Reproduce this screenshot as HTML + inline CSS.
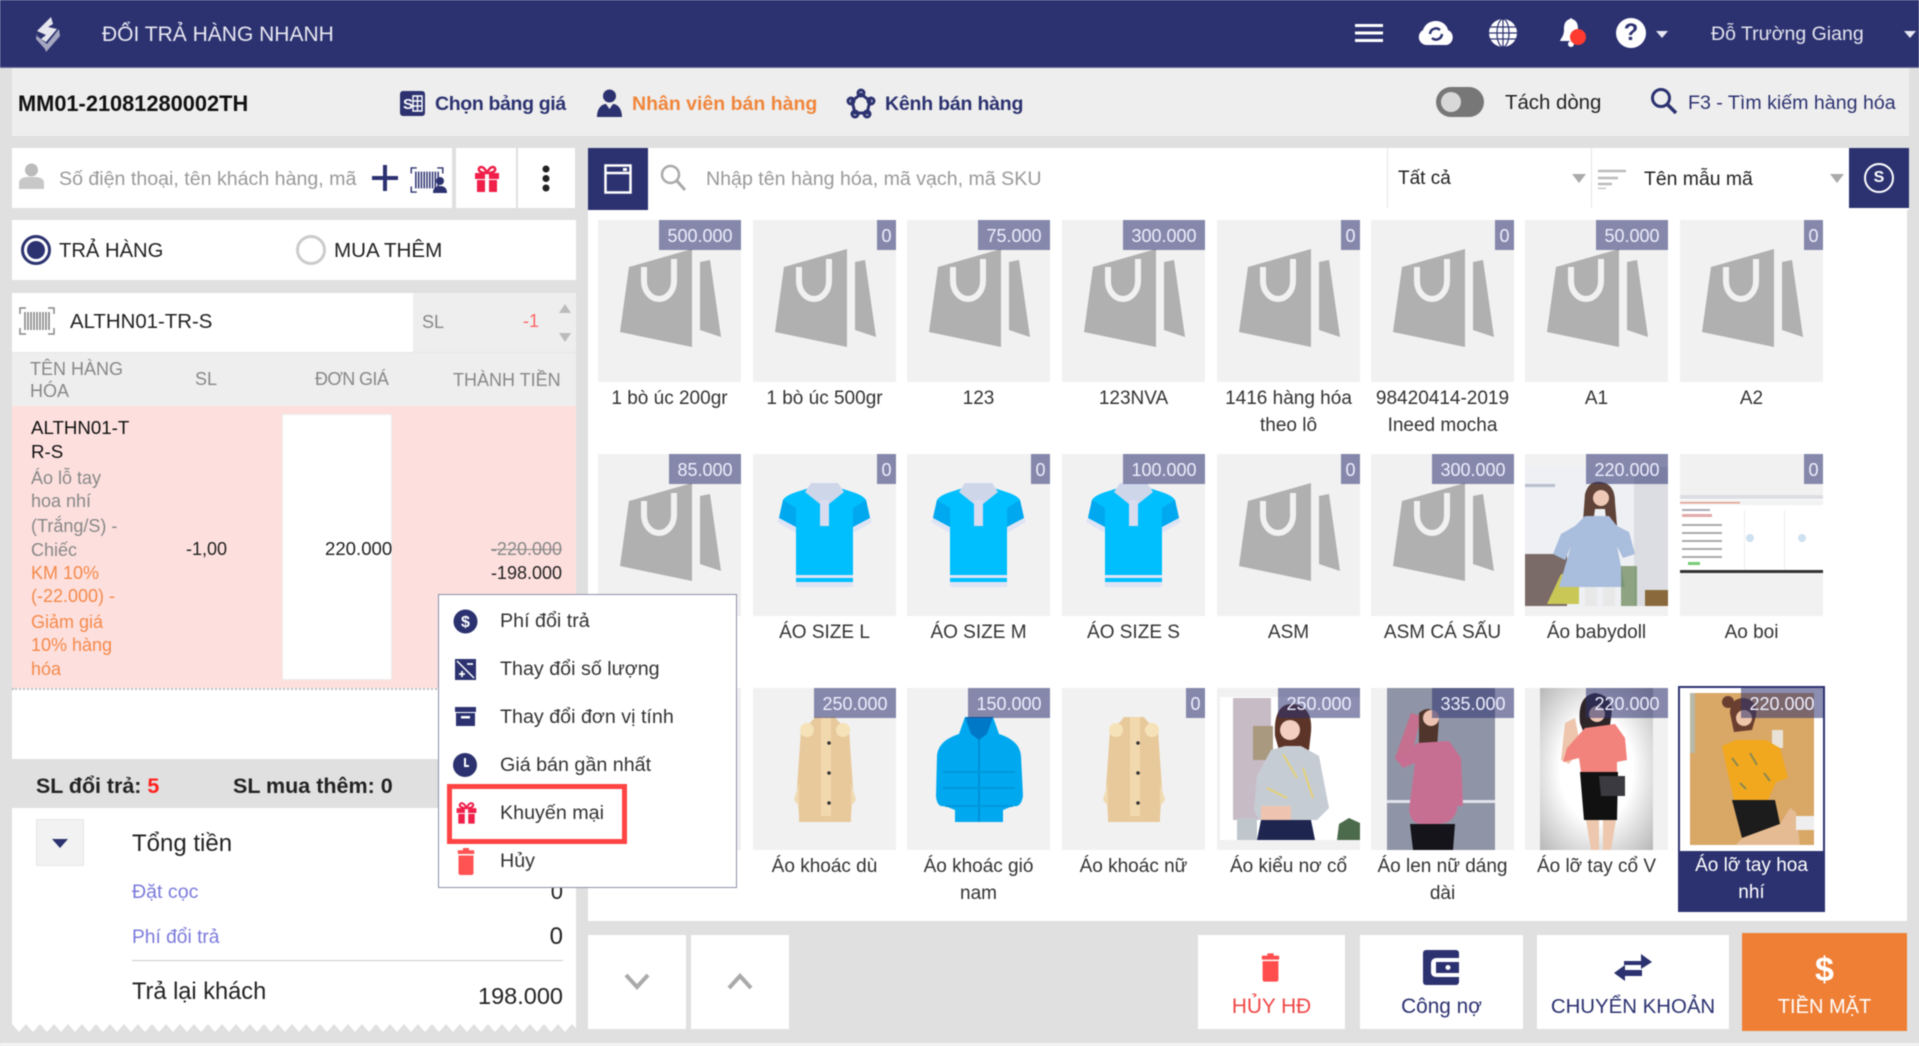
<!DOCTYPE html>
<html lang="vi"><head><meta charset="utf-8"><title>Đổi trả hàng nhanh</title>
<style>
html,body{margin:0;padding:0}
body{width:1919px;height:1046px;background:#e0e0e0;position:relative;overflow:hidden;font-family:"Liberation Sans","DejaVu Sans",sans-serif;font-size:18px;color:#333;filter:blur(.4px)}
.b{position:absolute}
.t{position:absolute;white-space:nowrap;line-height:24px}
.c{position:absolute;width:143px;height:162px;background:#f1f1f1}
.c svg{position:absolute;left:0;top:0}
.p{position:absolute;right:0;top:0;height:30px;line-height:32px;text-align:center;color:#eef;background:rgba(44,50,112,.55);font-size:18px}
.p7{width:82px}.p6{width:72px}.p1{width:19px}
.l{position:absolute;left:0;width:143px;top:165px;text-align:center;line-height:27px;color:#333;font-size:19px}
.g{color:#888}.o{color:#f5894a}.n{color:#2c3270}
.m{font-size:19.700px;color:#333}
</style></head><body>
<svg width="0" height="0" style="position:absolute"><defs>
<symbol id="bag" viewBox="0 0 143 162"><polygon points="31,47 94,37 94,127 22,112" fill="#b0b0b0"/><polygon points="31,47 94,29 94,47" fill="#b0b0b0"/><polygon points="102,42 112,40 123,117 102,110" fill="#b0b0b0"/><path d="M46 47v14a15 18 0 0 0 30 0v-22" fill="none" stroke="#f1f1f1" stroke-width="6"/></symbol>
<symbol id="shirt" viewBox="0 0 143 162"><path d="M56 34C44 38 34 40 30 46L26 64 43 74V133H100V74L117 64 113 46C109 40 99 38 87 34L72 44z" fill="#00bfff"/><path d="M30 46L26 64 43 74V54zM113 46L117 64 100 74V54z" fill="#00a8ef"/><path d="M26 64L43 73V79L24 68zM117 64L100 73V79L119 68z" fill="#dfe4f5"/><path d="M43 121H100V124H43zM43 128H100V133H43z" fill="#dfe4f5"/><path d="M58 29H85L91 38 76 50H67L52 38z" fill="#ced6ea"/><rect x="67" y="46" width="9" height="26" fill="#d8dcee"/></symbol>
<symbol id="coat" viewBox="0 0 143 162"><path d="M58 34L62 29H82L86 34 96 42 100 100 98 128H46L44 100 48 42z" fill="#e8c99c"/><rect x="68" y="29" width="10" height="105" fill="#f2d9ad"/><ellipse cx="54" cy="42" rx="7" ry="7" fill="#f6e2b8"/><ellipse cx="90" cy="42" rx="7" ry="7" fill="#f6e2b8"/><path d="M46 95L41 112 46 118zM98 95L103 112 98 118z" fill="#f0dab0"/><circle cx="76" cy="55" r="1.800" fill="#333"/><circle cx="76" cy="85" r="1.800" fill="#333"/><circle cx="76" cy="115" r="1.800" fill="#333"/><rect x="46" y="128" width="52" height="6" fill="#e8c99c"/></symbol>
<symbol id="gift" viewBox="0 0 28 28"><path d="M2 8h24v6H2zM4 15h8v12H4zM16 15h8v12h-8z" fill="currentColor"/><rect x="12" y="8" width="4" height="19" fill="#fff" opacity=".95"/><path d="M14 8C8 8 5 6 6 3.500S11 1 14 8zM14 8C20 8 23 6 22 3.500S17 1 14 8z" fill="none" stroke="currentColor" stroke-width="2.500"/></symbol>
<symbol id="trash" viewBox="0 0 24 36"><rect x="8" y="0" width="8" height="4" fill="currentColor"/><rect x="1" y="3" width="22" height="5" rx="1" fill="currentColor"/><path d="M2 10H22V33Q22 36 19 36H5Q2 36 2 33z" fill="currentColor"/></symbol>
<symbol id="bar" viewBox="0 0 36 28"><path d="M1 7V1H7M29 1H35V7M1 21V27H7M29 27H35V21" fill="none" stroke="currentColor" stroke-width="1.500"/><path d="M6 5v18M9 5v18M12 5v18M15 5v18M18 5v18M21 5v18M24 5v18M27 5v18M30 5v18" stroke="currentColor" stroke-width="1.600"/></symbol>
</defs></svg>

<!-- header -->
<div class="b" style="left:0;top:0;width:1919px;height:67px;background:#2c3270;border-bottom:1px solid #6a6d9e"></div>
<svg class="b" style="left:33px;top:16px" width="30" height="36" viewBox="0 0 30 36"><path d="M18 1L4 15 13 19 8 23 13 26 24 13 15 11 20 8z" fill="#e6e6ee"/><path d="M4 17L3 23 12 33 13 36 27 20 26 13 14 28 4 20z" fill="#a5a7c0"/></svg>
<div class="t" style="left:102px;top:23px;color:#e8e8f2;font-size:21px">ĐỔI TRẢ HÀNG NHANH</div>
<svg class="b" style="left:1355px;top:23px" width="28" height="20"><path d="M0 2.500H28M0 10H28M0 17.500H28" stroke="#fff" stroke-width="3"/></svg>
<svg class="b" style="left:1417px;top:20px" width="38" height="26" viewBox="0 0 38 26"><path d="M9 25a8 8 0 0 1-3-15C8 4 13 1 19 1s11 4 12 9a8 8 0 0 1-1 15z" fill="#fff"/><path d="M13 14a6 6 0 0 1 10-4M25 14a6 6 0 0 1-10 4" fill="none" stroke="#2c3270" stroke-width="2.500"/></svg>
<svg class="b" style="left:1488px;top:18px" width="30" height="30" viewBox="0 0 30 30"><circle cx="15" cy="15" r="14" fill="#fff"/><g fill="none" stroke="#2c3270" stroke-width="1.200"><ellipse cx="15" cy="15" rx="6" ry="14"/><path d="M15 1V29M2 9H28M1 15H29M2 21H28"/></g></svg>
<svg class="b" style="left:1558px;top:16px" width="32" height="32" viewBox="0 0 32 32"><path d="M12 3q1-2 2 0c6 2 6 7 6 11 0 6 3 8 4 11H2c1-3 4-5 4-11 0-4 0-9 6-11z" fill="#fff"/><circle cx="13" cy="28" r="3" fill="#fff"/><circle cx="20" cy="21" r="8" fill="#ff3b30"/></svg>
<div class="b" style="left:1616px;top:18px;width:30px;height:30px;border-radius:50%;background:#fff;color:#2c3270;font:bold 24px/30px 'Liberation Sans';text-align:center">?</div>
<svg class="b" style="left:1656px;top:31px" width="12" height="7"><path d="M0 0H12L6 7z" fill="#e8e8f2"/></svg>
<div class="t" style="left:1711px;top:22px;color:#e4e4ee;font-size:19.500px">Đỗ Trường Giang</div>
<svg class="b" style="left:1904px;top:31px" width="12" height="7"><path d="M0 0H12L6 7z" fill="#e8e8f2"/></svg>

<!-- toolbar -->
<div class="b" style="left:12px;top:68px;width:1897px;height:68px;background:#eee"></div>
<div class="t" style="left:18px;top:92px;font-weight:bold;color:#111;font-size:21.800px">MM01-21081280002TH</div>
<svg class="b" style="left:399px;top:90px" width="27" height="27" viewBox="0 0 27 27"><rect x="1" y="1" width="25" height="25" rx="3" fill="#2c3270"/><text x="4" y="19" font-size="15" font-weight="bold" fill="#fff" font-family="Liberation Sans">S</text><path d="M14 6H23V21H14zM14 11H23M14 16H23M18.500 6V21" fill="none" stroke="#fff" stroke-width="1.400"/></svg>
<div class="t" style="left:435px;top:92px;font-size:19.500px;color:#2c3270;font-weight:bold;letter-spacing:-.35px">Chọn bảng giá</div>
<svg class="b" style="left:597px;top:89px" width="25" height="29" viewBox="0 0 25 29"><circle cx="12.500" cy="7" r="6.500" fill="#2c3270"/><path d="M0 28C0 19 5 15 9 15L12.500 20 16 15C20 15 25 19 25 28z" fill="#2c3270"/></svg>
<div class="t" style="left:632px;top:92px;font-size:19.500px;color:#f0863c;font-weight:bold">Nhân viên bán hàng</div>
<svg class="b" style="left:846px;top:88px" width="30" height="31" viewBox="0 0 30 31"><path d="M15 6L24 13 21 25H9L6 13z" fill="none" stroke="#2c3270" stroke-width="3"/><g fill="none" stroke="#2c3270" stroke-width="3"><circle cx="15" cy="5" r="3"/><circle cx="5" cy="13" r="3"/><circle cx="25" cy="13" r="3"/><circle cx="9" cy="26" r="3"/><circle cx="21" cy="26" r="3"/></g></svg>
<div class="t" style="left:885px;top:92px;font-size:19.500px;color:#2c3270;font-weight:bold;letter-spacing:-.2px">Kênh bán hàng</div>
<div class="b" style="left:1436px;top:87px;width:48px;height:30px;border-radius:15px;background:#777"></div>
<div class="b" style="left:1441px;top:92px;width:20px;height:20px;border-radius:50%;background:#d8d8d8"></div>
<div class="t" style="left:1505px;top:91px;color:#222;font-size:20.400px">Tách dòng</div>
<svg class="b" style="left:1650px;top:87px" width="28" height="28" viewBox="0 0 28 28"><circle cx="11" cy="11" r="8.500" fill="none" stroke="#2c3270" stroke-width="3"/><path d="M17 17L26 26" stroke="#2c3270" stroke-width="3.500"/></svg>
<div class="t" style="left:1688px;top:91px;color:#2c3270;font-size:19.600px">F3 - Tìm kiếm hàng hóa</div>

<!-- customer -->
<div class="b" style="left:12px;top:148px;width:440px;height:60px;background:#fff"></div>
<div class="b" style="left:456px;top:148px;width:60px;height:60px;background:#fff"></div>
<div class="b" style="left:518px;top:148px;width:57px;height:60px;background:#fff"></div>
<svg class="b" style="left:18px;top:163px" width="27" height="26" viewBox="0 0 27 26"><circle cx="13.500" cy="7" r="6.500" fill="#bbb"/><path d="M1 26V20Q1 15 8 14H19Q26 15 26 20V26z" fill="#c8c8c8"/></svg>
<div class="t" style="left:59px;top:167px;color:#999;font-size:19.600px">Số điện thoại, tên khách hàng, mã</div>
<svg class="b" style="left:372px;top:165px" width="26" height="26"><path d="M13 0V26M0 13H26" stroke="#2c3270" stroke-width="4"/></svg>
<svg class="b n" style="left:409px;top:167px;color:#2c3270" width="38" height="26"><use href="#bar" width="36" height="26"/><circle cx="31" cy="14" r="4" fill="#2c3270"/><path d="M24 26Q24 19 31 19 38 19 38 26z" fill="#2c3270"/></svg>
<svg class="b" style="left:473px;top:165px;color:#f0204a" width="28" height="28"><use href="#gift"/></svg>
<svg class="b" style="left:541px;top:165px" width="10" height="27"><circle cx="5" cy="4" r="3.500" fill="#222"/><circle cx="5" cy="13.500" r="3.500" fill="#222"/><circle cx="5" cy="23" r="3.500" fill="#222"/></svg>

<!-- radios -->
<div class="b" style="left:12px;top:220px;width:564px;height:60px;background:#fff"></div>
<div class="b" style="left:21px;top:235px;width:30px;height:30px;border-radius:50%;border:3px solid #2c3270;box-sizing:border-box;background:#fff"></div>
<div class="b" style="left:27px;top:241px;width:18px;height:18px;border-radius:50%;background:#2c3270"></div>
<div class="t" style="left:59px;top:239px;color:#222;font-size:20.200px">TRẢ HÀNG</div>
<div class="b" style="left:296px;top:235px;width:30px;height:30px;border-radius:50%;border:3px solid #ccc;box-sizing:border-box;background:#fff"></div>
<div class="t" style="left:334px;top:239px;color:#222;font-size:20.600px">MUA THÊM</div>

<!-- code row -->
<div class="b" style="left:12px;top:293px;width:401px;height:59px;background:#fff"></div>
<div class="b" style="left:413px;top:293px;width:163px;height:59px;background:#eee"></div>
<svg class="b" style="left:19px;top:307px;color:#888" width="37" height="28"><use href="#bar" width="36" height="28"/></svg>
<div class="t" style="left:70px;top:310px;color:#222;font-size:20.400px">ALTHN01-TR-S</div>
<div class="t" style="left:422px;top:310px;color:#888;font-size:18px">SL</div>
<div class="t" style="left:523px;top:309px;color:#f66;font-size:18px">-1</div>
<svg class="b" style="left:559px;top:304px" width="12" height="9"><path d="M6 0L12 9H0z" fill="#bbb"/></svg>
<svg class="b" style="left:559px;top:333px" width="12" height="9"><path d="M6 9L12 0H0z" fill="#bbb"/></svg>

<!-- table -->
<div class="b" style="left:12px;top:352px;width:564px;height:54px;background:#eee;border-top:1px solid #e6e6e6;box-sizing:border-box"></div>
<div class="t g" style="left:30px;top:357px;font-size:18px">TÊN HÀNG</div>
<div class="t g" style="left:30px;top:379px;font-size:18px">HÓA</div>
<div class="t g" style="left:195px;top:367px;font-size:18px">SL</div>
<div class="t g" style="left:315px;top:367px;font-size:18px;letter-spacing:-.6px">ĐƠN GIÁ</div>
<div class="t g" style="left:453px;top:368px;font-size:18px">THÀNH TIỀN</div>
<div class="b" style="left:12px;top:406px;width:564px;height:282px;background:#fde0de"></div>
<div class="b" style="left:282px;top:414px;width:110px;height:266px;background:#fff;border:1px solid #ececec;box-sizing:border-box"></div>
<div class="t" style="left:31px;top:416px;color:#111;font-size:18.700px">ALTHN01-T</div>
<div class="t" style="left:31px;top:440px;color:#111;font-size:18.700px">R-S</div>
<div class="t g" style="left:31px;top:466px">Áo lỗ tay</div>
<div class="t g" style="left:31px;top:489px">hoa nhí</div>
<div class="t g" style="left:31px;top:514px">(Trắng/S) -</div>
<div class="t g" style="left:31px;top:538px">Chiếc</div>
<div class="t o" style="left:31px;top:561px">KM 10%</div>
<div class="t o" style="left:31px;top:584px">(-22.000) -</div>
<div class="t o" style="left:31px;top:610px">Giảm giá</div>
<div class="t o" style="left:31px;top:633px">10% hàng</div>
<div class="t o" style="left:31px;top:657px">hóa</div>
<div class="t" style="left:186px;top:537px;color:#222">-1,00</div>
<div class="t" style="left:325px;top:537px;color:#222;font-size:18.600px">220.000</div>
<div class="t g" style="right:1357px;top:537px;text-decoration:line-through">-220.000</div>
<div class="t" style="right:1357px;top:561px;color:#222">-198.000</div>

<!-- below table -->
<div class="b" style="left:12px;top:688px;width:564px;height:71px;background:#fff;border-top:2px dotted #bbb;box-sizing:border-box"></div>
<div class="t" style="left:36px;top:774px;font-weight:bold;color:#222;font-size:21.400px">SL đổi trả: <span style="color:#f22">5</span></div>
<div class="t" style="left:233px;top:774px;font-weight:bold;color:#222;font-size:21.500px">SL mua thêm: 0</div>
<div class="b" style="left:12px;top:808px;width:564px;height:216px;background:#fff"></div>
<svg class="b" style="left:12px;top:1023px" width="564" height="10"><defs><pattern id="z" width="14" height="10" patternUnits="userSpaceOnUse"><path d="M0 0H14V1L7 9 0 1z" fill="#fff"/></pattern></defs><rect width="564" height="10" fill="url(#z)"/></svg>
<div class="b" style="left:36px;top:819px;width:48px;height:47px;background:#f2f2f2;border:1px solid #e6e6e6;box-sizing:border-box"></div>
<svg class="b" style="left:52px;top:839px" width="16" height="9"><path d="M0 0H16L8 9z" fill="#2c3270"/></svg>
<div class="t" style="left:132px;top:830px;font-size:24px;color:#222;line-height:28px">Tổng tiền</div>
<div class="t" style="left:132px;top:880px;color:#7b7bdc;font-size:19.600px">Đặt cọc</div>
<div class="t" style="right:1356px;top:880px;color:#222;font-size:22px">0</div>
<div class="t" style="left:132px;top:926px;color:#7b7bdc;font-size:19.200px">Phí đổi trả</div>
<div class="t" style="right:1356px;top:925px;color:#222;font-size:24px">0</div>
<div class="b" style="left:132px;top:960px;width:431px;height:1px;background:#ccc"></div>
<div class="t" style="left:132px;top:978px;font-size:23.600px;color:#222;line-height:28px">Trả lại khách</div>
<div class="t" style="right:1356px;top:982px;font-size:23.500px;color:#222;line-height:28px">198.000</div>

<!-- product bar -->
<div class="b" style="left:588px;top:148px;width:1321px;height:62px;background:#fff"></div>
<div class="b" style="left:588px;top:148px;width:60px;height:62px;background:#2c3270"></div>
<svg class="b" style="left:604px;top:164px" width="28" height="30"><path d="M1.500 1.500H26.500V28.500H1.500zM1.500 9H26.500" fill="none" stroke="#fff" stroke-width="2.500"/><rect x="19" y="4" width="4" height="3" fill="#fff"/></svg>
<svg class="b" style="left:660px;top:164px" width="27" height="28" viewBox="0 0 27 28"><circle cx="10.500" cy="10.500" r="8.500" fill="none" stroke="#aaa" stroke-width="2.500"/><path d="M17 17L25 26" stroke="#aaa" stroke-width="3"/></svg>
<div class="t" style="left:706px;top:167px;color:#999;font-size:19.600px">Nhập tên hàng hóa, mã vạch, mã SKU</div>
<div class="b" style="left:1387px;top:148px;width:1px;height:60px;background:#e4e4e4"></div>
<div class="b" style="left:1591px;top:148px;width:1px;height:60px;background:#e4e4e4"></div>
<div class="t" style="left:1398px;top:167px;color:#222;font-size:19px">Tất cả</div>
<svg class="b" style="left:1572px;top:174px" width="14" height="9"><path d="M0 0H14L7 9z" fill="#aaa"/></svg>
<svg class="b" style="left:1598px;top:169px" width="28" height="20"><path d="M0 2H28M0 9H20M0 15H14M0 20H8" stroke="#bbb" stroke-width="2.500"/></svg>
<div class="t" style="left:1644px;top:167px;color:#222;font-size:19.400px">Tên mẫu mã</div>
<svg class="b" style="left:1830px;top:174px" width="14" height="9"><path d="M0 0H14L7 9z" fill="#aaa"/></svg>
<div class="b" style="left:1849px;top:148px;width:60px;height:60px;background:#2c3270"></div>
<div class="b" style="left:1864px;top:163px;width:30px;height:30px;border-radius:50%;border:2px solid #fff;box-sizing:border-box;color:#fff;font:bold 16px/26px 'Liberation Sans';text-align:center">S</div>

<!-- products panel -->
<div class="b" style="left:588px;top:210px;width:1319px;height:711px;background:#fff"></div>

<div class="c" style="left:598px;top:220px"><svg width="143" height="162"><use href="#bag"/></svg><div class="p p7">500.000</div><div class="l">1 bò úc 200gr</div></div>
<div class="c" style="left:753px;top:220px"><svg width="143" height="162"><use href="#bag"/></svg><div class="p p1">0</div><div class="l">1 bò úc 500gr</div></div>
<div class="c" style="left:907px;top:220px"><svg width="143" height="162"><use href="#bag"/></svg><div class="p p6">75.000</div><div class="l">123</div></div>
<div class="c" style="left:1062px;top:220px"><svg width="143" height="162"><use href="#bag"/></svg><div class="p p7">300.000</div><div class="l">123NVA</div></div>
<div class="c" style="left:1217px;top:220px"><svg width="143" height="162"><use href="#bag"/></svg><div class="p p1">0</div><div class="l">1416 hàng hóa theo lô</div></div>
<div class="c" style="left:1371px;top:220px"><svg width="143" height="162"><use href="#bag"/></svg><div class="p p1">0</div><div class="l">98420414-2019 Ineed mocha</div></div>
<div class="c" style="left:1525px;top:220px"><svg width="143" height="162"><use href="#bag"/></svg><div class="p p6">50.000</div><div class="l">A1</div></div>
<div class="c" style="left:1680px;top:220px"><svg width="143" height="162"><use href="#bag"/></svg><div class="p p1">0</div><div class="l">A2</div></div>

<div class="c" style="left:598px;top:454px"><svg width="143" height="162"><use href="#bag"/></svg><div class="p p6">85.000</div></div>
<div class="c" style="left:753px;top:454px"><svg width="143" height="162"><use href="#shirt"/></svg><div class="p p1">0</div><div class="l">ÁO SIZE L</div></div>
<div class="c" style="left:907px;top:454px"><svg width="143" height="162"><use href="#shirt"/></svg><div class="p p1">0</div><div class="l">ÁO SIZE M</div></div>
<div class="c" style="left:1062px;top:454px"><svg width="143" height="162"><use href="#shirt"/></svg><div class="p p7">100.000</div><div class="l">ÁO SIZE S</div></div>
<div class="c" style="left:1217px;top:454px"><svg width="143" height="162"><use href="#bag"/></svg><div class="p p1">0</div><div class="l">ASM</div></div>
<div class="c" style="left:1371px;top:454px"><svg width="143" height="162"><use href="#bag"/></svg><div class="p p7">300.000</div><div class="l">ASM CÁ SẤU</div></div>
<div class="c" style="left:1525px;top:454px"><svg width="143" height="162" viewBox="0 0 143 162">
<rect y="13" width="143" height="139" fill="#eef0f4"/><rect y="30" width="30" height="3" fill="#b8c0cc"/><rect x="109" y="13" width="34" height="139" fill="#dcdde2"/><rect y="100" width="42" height="52" fill="#7a6a68"/><path d="M22 150L36 120 54 122 54 150z" fill="#c9c755"/><path d="M60 40Q64 26 76 28 90 30 90 48L92 72 82 74 80 55H70L68 70 58 68z" fill="#5f4338"/><circle cx="76" cy="44" r="8" fill="#eec9b8"/><rect x="60" y="130" width="12" height="22" fill="#e8e8e8"/><rect x="78" y="130" width="12" height="22" fill="#e8e8e8"/><path d="M60 62L84 62 92 72 104 78 110 100 98 104 92 92 100 133H34L46 92 40 106 28 100 36 80 50 72z" fill="#a9bddc"/><rect x="96" y="112" width="16" height="40" fill="#6c8a5c" opacity=".75"/><rect x="120" y="136" width="23" height="16" fill="#8a6a3c"/></svg><div class="p p7">220.000</div><div class="l">Áo babydoll</div></div>
<div class="c" style="left:1680px;top:454px"><svg width="143" height="162" viewBox="0 0 143 162">
<rect y="41" width="143" height="76" fill="#fff"/><rect y="41" width="143" height="4" fill="#dcdee4"/><rect y="46" width="143" height="5" fill="#f2f2f2"/><rect y="48" width="60" height="1.500" fill="#e6a090"/><rect x="2" y="55" width="28" height="2" fill="#aaaab8"/><rect x="2" y="60" width="30" height="3" fill="#e2aaaa"/><g fill="#aaa"><rect x="2" y="70" width="40" height="2"/><rect x="2" y="78" width="40" height="2"/><rect x="2" y="86" width="40" height="2"/><rect x="2" y="94" width="40" height="2"/><rect x="2" y="102" width="40" height="2"/></g><rect x="8" y="108" width="12" height="3" fill="#7c7"/><rect x="64" y="56" width="1" height="60" fill="#eee"/><rect x="104" y="56" width="1" height="60" fill="#eee"/><circle cx="70" cy="84" r="4" fill="#cfe0ef"/><circle cx="122" cy="84" r="4" fill="#cfe0ef"/><rect y="116" width="143" height="3" fill="#333"/></svg><div class="p p1">0</div><div class="l">Ao boi</div></div>

<div class="c" style="left:598px;top:688px"></div>
<div class="c" style="left:753px;top:688px"><svg width="143" height="162"><use href="#coat"/></svg><div class="p p7">250.000</div><div class="l">Áo khoác dù</div></div>
<div class="c" style="left:907px;top:688px"><svg width="143" height="162" viewBox="0 0 143 162"><path d="M52 46L58 29H86L92 46C104 50 113 56 114 68L116 108Q114 120 106 118L96 122V134H48V122L38 118Q30 120 29 108L30 68C31 56 40 50 52 46z" fill="#00a9ef"/><path d="M58 29H86L80 46 72 52 64 46z" fill="#0078c8"/><path d="M72 52V134" stroke="#0090d8" stroke-width="2"/><path d="M36 84H108M36 100H108M38 118H106" stroke="#0096dd" stroke-width="2"/></svg><div class="p p7">150.000</div><div class="l">Áo khoác gió nam</div></div>
<div class="c" style="left:1062px;top:688px"><svg width="143" height="162"><use href="#coat"/></svg><div class="p p1">0</div><div class="l">Áo khoác nữ</div></div>
<div class="c" style="left:1217px;top:688px"><svg width="143" height="162" viewBox="0 0 143 162">
<rect x="3" y="9" width="140" height="143" fill="#fff"/><rect x="16" y="10" width="38" height="122" fill="#c7bcc6"/><rect x="36" y="38" width="20" height="34" fill="#a9997f"/><path d="M58 48Q56 15 76 16 96 18 94 44L92 62 62 62z" fill="#5c3428"/><circle cx="73" cy="42" r="10" fill="#f2cfc0"/><path d="M54 62L68 58 84 58 102 68 112 120 100 132H42L37 122 40 88z" fill="#c6ccd4"/><path d="M66 66L80 90M50 100L70 110M86 80L96 110" stroke="#e4d27a" stroke-width="2"/><path d="M44 132H94L98 152H40z" fill="#1e2650"/><rect x="44" y="118" width="30" height="14" fill="#eec4b0"/><path d="M120 152L122 136 132 130 143 135V152z" fill="#4c6a4c"/><rect x="20" y="130" width="20" height="22" fill="#bfc7cc"/></svg><div class="p p7">250.000</div><div class="l">Áo kiểu nơ cổ</div></div>
<div class="c" style="left:1371px;top:688px"><svg width="143" height="162" viewBox="0 0 143 162">
<rect x="16" y="0" width="108" height="162" fill="#8f95a6"/><rect x="16" y="112" width="108" height="3" fill="#dfe2ea"/><path d="M24 70L40 25 50 28 40 70z" fill="#c4708e"/><path d="M48 25Q60 15 68 30L66 60 60 85 48 85z" fill="#4f352c"/><circle cx="60" cy="30" r="8" fill="#ecc2b2"/><path d="M24 70L36 65 46 55 78 53 90 70 92 118H86L86 122Q82 136 66 136H50Q40 136 38 122L44 75 32 80z" fill="#c76f93"/><path d="M39 136H84L82 162H42z" fill="#15141a"/></svg><div class="p p7">335.000</div><div class="l">Áo len nữ dáng dài</div></div>
<div class="c" style="left:1525px;top:688px"><svg width="143" height="162" viewBox="0 0 143 162">
<defs><radialGradient id="rg" cx=".5" cy=".5" r=".72"><stop offset=".45" stop-color="#fff"/><stop offset="1" stop-color="#b4b4b4"/></radialGradient></defs><rect x="15" y="0" width="113" height="162" fill="url(#rg)"/><path d="M55 35Q52 8 70 5 90 8 86 30L84 45 60 48z" fill="#2f2428"/><circle cx="72" cy="26" r="8" fill="#f0c8b4"/><path d="M40 35L50 30 56 60 44 76 36 72z" fill="#eec5ad"/><path d="M60 40L90 36 100 50 102 72 92 74 92 84H56L54 70 38 74 42 60z" fill="#f2837c"/><path d="M55 84H93L92 132H59z" fill="#111"/><path d="M74 88H100V108H76z" fill="#3a3a40"/><path d="M61 132H74L74 162H66zM78 132H91L86 162H78z" fill="#edc7ae"/></svg><div class="p p7">220.000</div><div class="l">Áo lỡ tay cổ V</div></div>

<!-- selected -->
<div class="b" style="left:1678px;top:686px;width:147px;height:226px;background:#2c3270"></div>
<div class="c" style="left:1680px;top:688px;background:#fff;height:163px"><svg width="143" height="162" viewBox="0 0 143 162">
<rect x="10" y="5" width="124" height="152" fill="#d9a766"/><rect x="10" y="5" width="5" height="60" fill="#b8b8a8"/><circle cx="48" cy="14" r="6" fill="#6a3f30"/><path d="M50 25Q50 10 64 10 78 12 76 28L72 42 54 44z" fill="#6a3f30"/><circle cx="64" cy="30" r="8" fill="#f0c6aa"/><rect x="92" y="42" width="11" height="18" fill="#e8e2d8"/><path d="M42 58L56 52 86 52 100 60 108 90 96 94 88 112H54L48 86z" fill="#f2a81e"/><path d="M52 70l6 8M70 65l7 12M60 95l6 6M84 85l6 8" stroke="#8a8a50" stroke-width="2"/><path d="M52 112H95L100 136 62 150z" fill="#1c1c1c"/><path d="M62 150L100 136 110 120 116 124 120 157H56z" fill="#e4bb93"/><rect x="116" y="128" width="18" height="14" fill="#eee"/></svg><div class="p p7">220.000</div></div>
<div class="t" style="left:1680px;width:143px;top:852px;text-align:center;color:#fff;white-space:normal;line-height:27px;font-size:19px">Áo lỡ tay hoa nhí</div>

<!-- context menu -->
<div class="b" style="left:438px;top:594px;width:299px;height:294px;background:#fff;border:1px solid #8c8fa8;box-sizing:border-box"></div>
<div class="b" style="left:447px;top:784px;width:180px;height:60px;border:5px solid #ff4444;box-sizing:border-box"></div>
<svg class="b" style="left:453px;top:609px" width="25" height="25" viewBox="0 0 25 25"><circle cx="12.500" cy="12.500" r="12" fill="#2c3270"/><text x="12.500" y="18" font-size="16" font-weight="bold" text-anchor="middle" fill="#fff" font-family="Liberation Sans">$</text></svg>
<div class="t m" style="left:500px;top:609px">Phí đổi trả</div>
<svg class="b" style="left:455px;top:659px" width="21" height="21" viewBox="0 0 21 21"><rect width="21" height="21" fill="#2c3270"/><path d="M2 2L19 19" stroke="#fff" stroke-width="1.500"/><path d="M4 15H10M7 12V18M12 5H18" stroke="#fff" stroke-width="1.800"/></svg>
<div class="t m" style="left:500px;top:657px">Thay đổi số lượng</div>
<svg class="b" style="left:455px;top:707px" width="21" height="19" viewBox="0 0 21 19"><rect width="21" height="5" fill="#2c3270"/><rect x="1" y="6" width="19" height="13" fill="#2c3270"/><rect x="6" y="9" width="9" height="2.500" fill="#fff"/></svg>
<div class="t m" style="left:500px;top:705px">Thay đổi đơn vị tính</div>
<svg class="b" style="left:453px;top:753px" width="24" height="24" viewBox="0 0 24 24"><circle cx="12" cy="12" r="12" fill="#2c3270"/><path d="M12 5V13H16" stroke="#fff" stroke-width="2" fill="none"/></svg>
<div class="t m" style="left:500px;top:753px">Giá bán gần nhất</div>
<svg class="b" style="left:455px;top:801px;color:#f0204a" width="23" height="24" viewBox="0 0 28 28"><use href="#gift"/></svg>
<div class="t m" style="left:500px;top:801px">Khuyến mại</div>
<svg class="b" style="left:455px;top:848px;color:#ff5252" width="22" height="27" viewBox="0 0 24 36"><use href="#trash"/></svg>
<div class="t m" style="left:500px;top:849px">Hủy</div>

<!-- bottom buttons -->
<div class="b" style="left:588px;top:935px;width:98px;height:94px;background:#fff"></div>
<div class="b" style="left:691px;top:935px;width:98px;height:94px;background:#fff"></div>
<svg class="b" style="left:624px;top:973px" width="26" height="18"><path d="M2 2L13 14 24 2" fill="none" stroke="#aaa" stroke-width="4"/></svg>
<svg class="b" style="left:727px;top:972px" width="26" height="18"><path d="M2 16L13 4 24 16" fill="none" stroke="#aaa" stroke-width="4"/></svg>
<div class="b" style="left:1198px;top:935px;width:147px;height:94px;background:#fff"></div>
<svg class="b" style="left:1261px;top:953px;color:#ff4d4d" width="19" height="29" viewBox="0 0 24 36"><use href="#trash"/></svg>
<div class="t" style="left:1198px;width:147px;text-align:center;top:995px;color:#f04848;font-size:20.800px">HỦY HĐ</div>
<div class="b" style="left:1360px;top:935px;width:163px;height:94px;background:#fff"></div>
<svg class="b" style="left:1423px;top:950px" width="36" height="35" viewBox="0 0 36 35"><rect width="36" height="35" rx="3" fill="#2c3270"/><path d="M36 8H14Q8 8 8 14V22Q8 27 14 27H36z" fill="#fff"/><rect x="13" y="12" width="23" height="11" fill="#2c3270"/><circle cx="25" cy="17.500" r="2.500" fill="#fff"/></svg>
<div class="t" style="left:1360px;width:163px;text-align:center;top:995px;color:#2c3270;font-size:20.800px">Công nợ</div>
<div class="b" style="left:1537px;top:935px;width:192px;height:94px;background:#fff"></div>
<svg class="b" style="left:1614px;top:953px" width="38" height="29" viewBox="0 0 38 29"><path d="M10 8H27V1L38 9 27 16V12H10z" fill="#2c3270"/><path d="M28 17H11V12L0 20 11 28V23H28z" fill="#2c3270"/></svg>
<div class="t" style="left:1537px;width:192px;text-align:center;top:995px;color:#2c3270;font-size:20.400px">CHUYỂN KHOẢN</div>
<div class="b" style="left:1742px;top:933px;width:165px;height:98px;background:#ee7f35"></div>
<div class="t" style="left:1742px;width:165px;text-align:center;top:950px;color:#fff;font-size:34px;line-height:40px;font-weight:bold">$</div>
<div class="t" style="left:1742px;width:165px;text-align:center;top:995px;color:#fff;font-size:20px">TIỀN MẶT</div>

<div class="b" style="left:0;top:1043px;width:1919px;height:3px;background:#f4f4f4"></div>
</body></html>
